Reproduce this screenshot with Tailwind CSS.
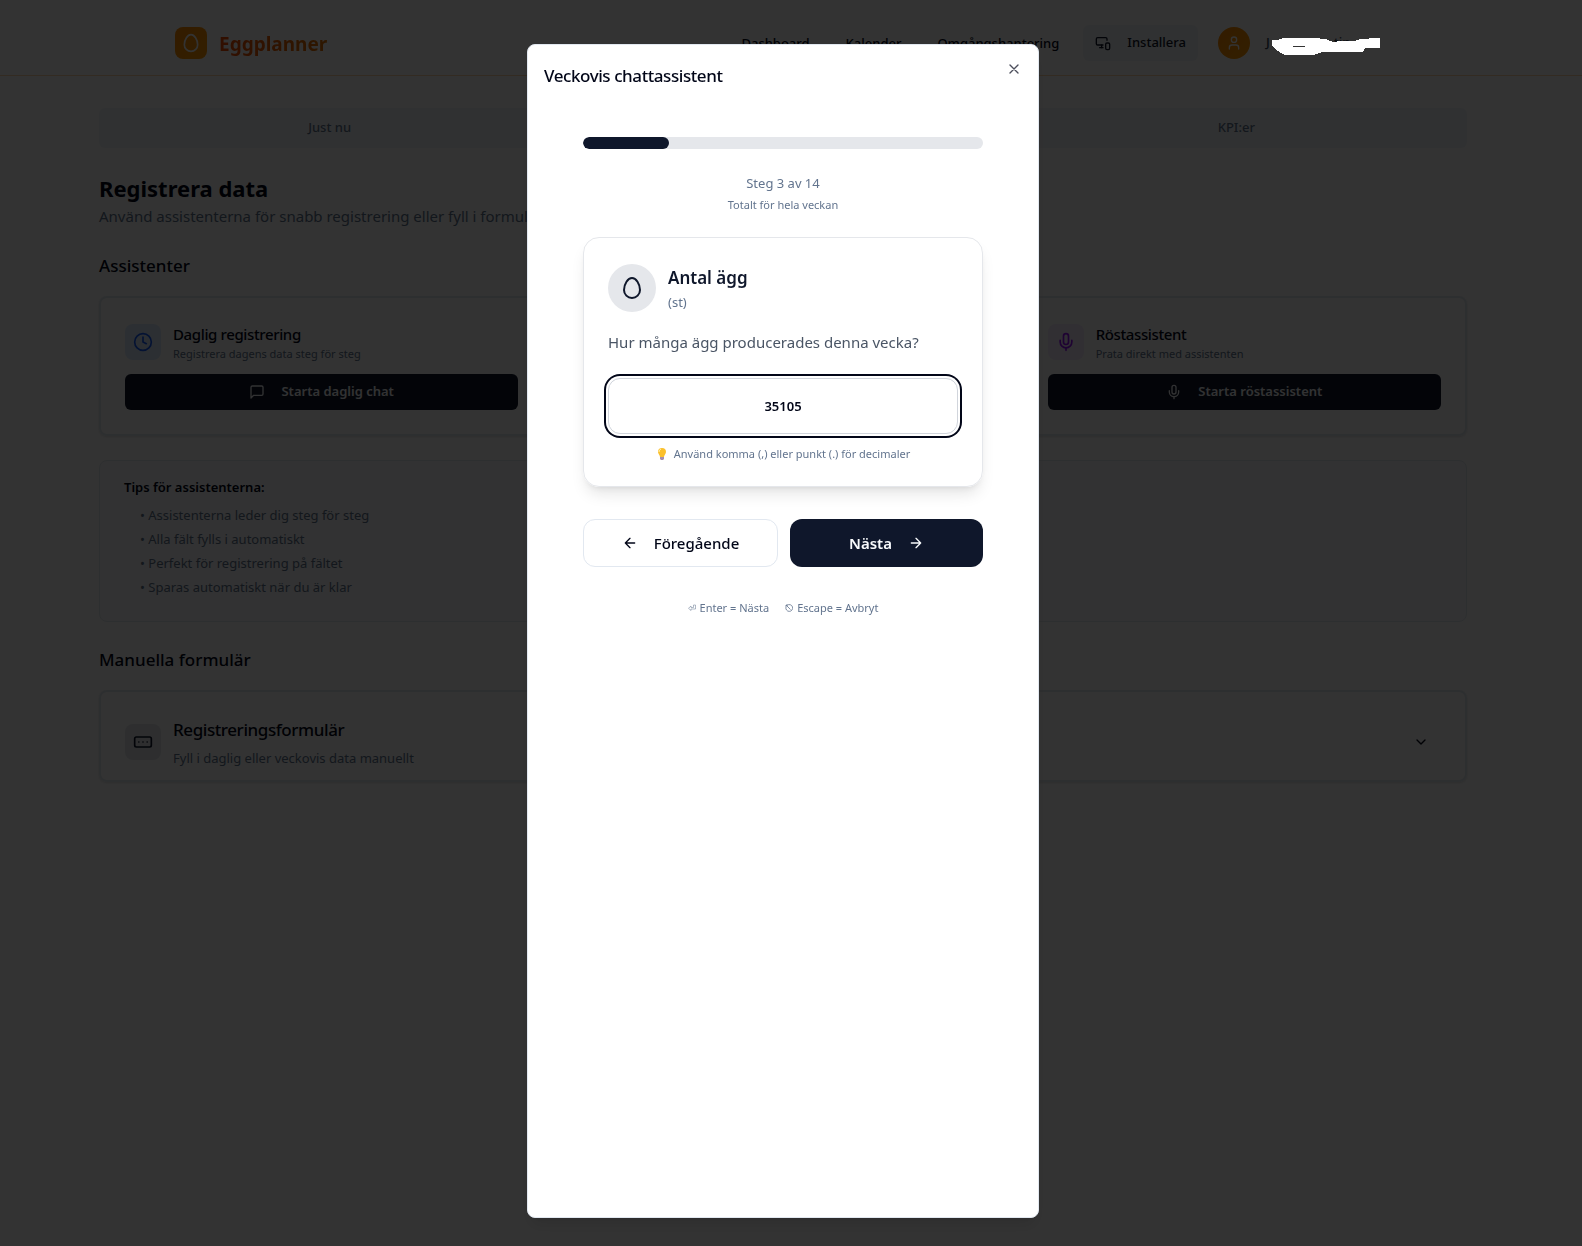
<!DOCTYPE html>
<html lang="sv">
<head>
  <meta charset="UTF-8" />
  <meta name="viewport" content="width=device-width, initial-scale=1.0"/>
  <title>Eggplanner</title>
  <script src="https://cdn.jsdelivr.net/npm/@tailwindcss/browser@4"></script>
</head>
<body class="min-h-screen overflow-x-hidden bg-white font-['Segoe_UI','Noto_Sans',sans-serif] text-slate-950">

  <!-- Header -->
  <header class="border-b border-orange-200 pt-[11px] pr-4">
    <div class="mx-auto flex h-16 max-w-7xl items-center px-8">
      <a href="#" class="flex items-center gap-3">
        <span class="flex size-8 items-center justify-center rounded-lg bg-linear-to-br from-orange-400 to-amber-500 text-white">
          <svg class="size-5" viewBox="0 0 24 24" fill="none" stroke="currentColor" stroke-width="2" stroke-linecap="round" stroke-linejoin="round"><path d="M12 2C8 2 4 8 4 14a8 8 0 0 0 16 0c0-6-4-12-8-12"/></svg>
        </span>
        <span class="bg-linear-to-r from-orange-600 to-amber-600 bg-clip-text pt-0.5 text-[19px] leading-7 font-bold text-transparent">Eggplanner</span>
      </a>
      <nav class="mr-6 ml-auto flex items-center gap-9 pt-0.5 text-[13px] font-medium">
        <a href="#">Dashboard</a>
        <a href="#">Kalender</a>
        <a href="#">Omgångshantering</a>
      </nav>
      <button type="button" class="mr-5 flex h-9 items-center gap-4 rounded-md bg-slate-100 px-3 text-[13px] font-medium text-slate-900">
        <svg class="size-4" viewBox="0 0 24 24" fill="none" stroke="currentColor" stroke-width="2" stroke-linecap="round" stroke-linejoin="round"><path d="M18 8V6a2 2 0 0 0-2-2H4a2 2 0 0 0-2 2v7a2 2 0 0 0 2 2h8"/><path d="M10 19v-3.96 3.15"/><path d="M7 19h5"/><rect width="6" height="10" x="16" y="12" rx="2"/></svg>
        Installera
      </button>
      <div class="flex items-center gap-4">
        <span class="flex size-8 items-center justify-center rounded-full bg-linear-to-br from-orange-400 to-amber-500 text-white">
          <svg class="size-4" viewBox="0 0 24 24" fill="none" stroke="currentColor" stroke-width="2" stroke-linecap="round" stroke-linejoin="round"><path d="M19 21v-2a4 4 0 0 0-4-4H9a4 4 0 0 0-4 4v2"/><circle cx="12" cy="7" r="4"/></svg>
        </span>
        <span class="relative flex w-[125px] gap-16 text-[13px] font-medium text-slate-700">
          <span>J</span><span>tin</span>
          <svg class="absolute top-1 left-1 z-60 h-[18px] w-[110px]" viewBox="0 0 110 18" fill="#fff" shape-rendering="crispEdges"><path fill-rule="evenodd" d="M2 3h6l5-2h35l3 1h5l7 3 8-1h13l6-2h5l7-1h8v10h-15l-2 4H53l-10 3H15L6 13l-1-2-3-2zM23 9v1h12V9z"/></svg>
        </span>
      </div>
    </div>
  </header>

  <!-- Page -->
  <div class="pr-4">
    <main class="mx-auto max-w-[1400px] px-4 pt-8">
      <div class="grid h-10 grid-cols-3 rounded-md bg-slate-100 p-1 text-[13px] font-medium text-slate-500">
        <button type="button">Just nu</button>
        <span class="rounded-sm bg-white shadow-sm"></span>
        <button type="button">KPI:er</button>
      </div>

      <h1 class="mt-6 text-[22px] leading-8 font-bold">Registrera data</h1>
      <p class="text-[15px] leading-6 text-slate-500">Använd assistenterna för snabb registrering eller fyll i formulär</p>

      <h2 class="mt-6 mb-4 text-[17px] leading-7 font-medium">Assistenter</h2>
      <div class="grid grid-cols-3 gap-4">
        <section class="rounded-lg border-2 border-slate-200 p-6 shadow-sm">
          <div class="flex items-center gap-3">
            <span class="flex size-9 items-center justify-center rounded-lg bg-blue-100 text-blue-600">
              <svg class="size-5" viewBox="0 0 24 24" fill="none" stroke="currentColor" stroke-width="2" stroke-linecap="round" stroke-linejoin="round"><circle cx="12" cy="12" r="10"/><path d="M12 6v6l4 2"/></svg>
            </span>
            <div>
              <h3 class="text-[15px] leading-6 font-medium tracking-tight">Daglig registrering</h3>
              <p class="text-[11px] leading-4 text-slate-500">Registrera dagens data steg för steg</p>
            </div>
          </div>
          <button type="button" class="mt-3 flex h-9 w-full items-center justify-center gap-4 rounded-md bg-slate-900 text-[13px] font-semibold text-slate-50">
            <svg class="size-4" viewBox="0 0 24 24" fill="none" stroke="currentColor" stroke-width="2" stroke-linecap="round" stroke-linejoin="round"><path d="M21 15a2 2 0 0 1-2 2H7l-4 4V5a2 2 0 0 1 2-2h14a2 2 0 0 1 2 2z"/></svg>
            Starta daglig chat
          </button>
        </section>

        <section class="rounded-lg border-2 border-slate-200 p-6 shadow-sm"></section>

        <section class="rounded-lg border-2 border-slate-200 p-6 shadow-sm">
          <div class="flex items-center gap-3">
            <span class="flex size-9 items-center justify-center rounded-lg bg-purple-100 text-purple-600">
              <svg class="size-5" viewBox="0 0 24 24" fill="none" stroke="currentColor" stroke-width="2" stroke-linecap="round" stroke-linejoin="round"><path d="M12 2a3 3 0 0 0-3 3v7a3 3 0 0 0 6 0V5a3 3 0 0 0-3-3Z"/><path d="M19 10v2a7 7 0 0 1-14 0v-2"/><path d="M12 19v3"/></svg>
            </span>
            <div>
              <h3 class="text-[15px] leading-6 font-medium tracking-tight">Röstassistent</h3>
              <p class="text-[11px] leading-4 text-slate-500">Prata direkt med assistenten</p>
            </div>
          </div>
          <button type="button" class="mt-3 flex h-9 w-full items-center justify-center gap-4 rounded-md bg-slate-900 text-[13px] font-semibold text-slate-50">
            <svg class="size-4" viewBox="0 0 24 24" fill="none" stroke="currentColor" stroke-width="2" stroke-linecap="round" stroke-linejoin="round"><path d="M12 2a3 3 0 0 0-3 3v7a3 3 0 0 0 6 0V5a3 3 0 0 0-3-3Z"/><path d="M19 10v2a7 7 0 0 1-14 0v-2"/><path d="M12 19v3"/></svg>
            Starta röstassistent
          </button>
        </section>
      </div>

      <!-- Tips -->
      <section class="mt-6 rounded-lg border border-slate-200 bg-slate-50 px-6 pt-4 pb-6 text-[13px] leading-5">
        <h3 class="font-semibold">Tips för assistenterna:</h3>
        <ul class="mt-2 ml-4 space-y-1 text-slate-500">
          <li>• Assistenterna leder dig steg för steg</li>
          <li>• Alla fält fylls i automatiskt</li>
          <li>• Perfekt för registrering på fältet</li>
          <li>• Sparas automatiskt när du är klar</li>
        </ul>
      </section>

      <h2 class="mt-6 mb-4 text-[17px] leading-7 font-medium">Manuella formulär</h2>
      <section class="flex items-center gap-3 rounded-lg border-2 border-slate-200 px-6 pt-6 pb-3 shadow-sm">
        <span class="flex size-9 items-center justify-center rounded-lg bg-gray-200 text-slate-900">
          <svg class="size-5" viewBox="0 0 24 24" fill="none" stroke="currentColor" stroke-width="2" stroke-linecap="round" stroke-linejoin="round"><rect width="20" height="12" x="2" y="6" rx="2"/><path d="M12 12h.01M17 12h.01M7 12h.01"/></svg>
        </span>
        <div>
          <h3 class="text-[17px] leading-7 font-medium tracking-tight">Registreringsformulär</h3>
          <p class="mt-1 text-[13px] leading-5 text-slate-500">Fyll i daglig eller veckovis data manuellt</p>
        </div>
        <button type="button" aria-label="Visa formulär" class="ml-auto px-3">
          <svg class="size-4" viewBox="0 0 24 24" fill="none" stroke="currentColor" stroke-width="2" stroke-linecap="round" stroke-linejoin="round"><path d="m6 9 6 6 6-6"/></svg>
        </button>
      </section>
    </main>
  </div>

  <!-- Overlay -->
  <div class="fixed inset-0 z-40 bg-black/80"></div>

  <!-- Chat dialog -->
  <div class="fixed inset-0 z-50 flex justify-center pt-11 pr-4 pb-7">
    <div role="dialog" aria-labelledby="dialogTitle" class="relative w-full max-w-lg rounded-lg border border-slate-200 bg-white p-4 shadow-lg">
      <h2 id="dialogTitle" class="text-[17px] leading-[30px] font-medium tracking-tight">Veckovis chattassistent</h2>
      <button type="button" aria-label="Stäng" class="absolute top-4 right-4 opacity-70">
        <svg class="size-4" viewBox="0 0 24 24" fill="none" stroke="currentColor" stroke-width="2" stroke-linecap="round" stroke-linejoin="round"><path d="M18 6 6 18M6 6l12 12"/></svg>
      </button>

      <div class="mx-auto max-w-[400px] pt-[46px]">
        <div class="h-3 overflow-hidden rounded-full bg-gray-200">
          <div class="h-full rounded-full bg-slate-900" style="width: 21.4%"></div>
        </div>
        <p class="mt-6 text-center text-[13px] leading-5 text-slate-500">Steg 3 av 14</p>
        <p class="mt-1 text-center text-[11px] leading-4 text-slate-500">Totalt för hela veckan</p>

        <div class="mt-6 rounded-2xl border border-gray-200 p-6 shadow-lg">
          <div class="flex items-center gap-3 py-0.5">
            <span class="flex size-12 items-center justify-center rounded-full bg-gray-200 text-slate-900">
              <svg class="size-6" viewBox="0 0 24 24" fill="none" stroke="currentColor" stroke-width="2" stroke-linecap="round" stroke-linejoin="round"><path d="M12 2C8 2 4 8 4 14a8 8 0 0 0 16 0c0-6-4-12-8-12"/></svg>
            </span>
            <div>
              <h3 class="text-[17px] leading-7 font-semibold text-slate-900">Antal ägg</h3>
              <p class="text-[13px] leading-5 text-slate-500">(st)</p>
            </div>
          </div>
          <label for="eggCount" class="mt-4 block text-[15px] leading-6 text-gray-600">Hur många ägg producerades denna vecka?</label>
          <input id="eggCount" type="text" inputmode="decimal" value="35105" class="mt-6 block h-14 w-full rounded-xl border border-gray-300 bg-white text-center text-[13px] font-semibold ring-2 ring-slate-950 ring-offset-2 outline-none"/>
          <p class="mt-3 flex items-center justify-center gap-1.5 text-[11px] leading-4 text-slate-500">
            <svg class="size-3" viewBox="0 0 12 12"><path d="M6 0a4 4 0 0 0-4 4c0 2 2 3 2 5h4c0-2 2-3 2-5a4 4 0 0 0-4-4z" fill="#fbc02d"/><path d="M5 1a3 3 0 0 0-2 3" fill="none" stroke="#fff3b0"/><path d="M4 9h4v2L7 12H5l-1-1z" fill="#a58fb0"/></svg>
            Använd komma (,) eller punkt (.) för decimaler
          </p>
        </div>

        <div class="mt-8 flex gap-3">
          <button type="button" class="flex h-12 flex-1 items-center justify-center gap-4 rounded-xl border border-slate-200 bg-white text-[15px] font-medium">
            <svg class="size-4" viewBox="0 0 24 24" fill="none" stroke="currentColor" stroke-width="2" stroke-linecap="round" stroke-linejoin="round"><path d="m12 19-7-7 7-7M19 12H5"/></svg>
            Föregående
          </button>
          <button type="button" class="flex h-12 flex-1 items-center justify-center gap-4 rounded-xl bg-slate-900 text-[15px] font-semibold text-slate-50">
            Nästa
            <svg class="size-4" viewBox="0 0 24 24" fill="none" stroke="currentColor" stroke-width="2" stroke-linecap="round" stroke-linejoin="round"><path d="M5 12h14M12 5l7 7-7 7"/></svg>
          </button>
        </div>

        <div class="mt-8 flex justify-center gap-4 text-[11px] leading-[18px] text-slate-500">
          <span class="flex items-center gap-1">
            <svg class="size-2" viewBox="0 0 8 8" fill="none" stroke="currentColor" stroke-width=".5"><path d="M5.500 1h2v4H3v1.500L.5 4.300 3 2v1.500h2.500z"/></svg>
            Enter = Nästa
          </span>
          <span class="flex items-center gap-1">
            <svg class="size-2" viewBox="0 0 8 8" fill="none" stroke="currentColor" stroke-width=".8"><path d="M2.300 1.200A3.400 3.400 0 1 1 1 3M5.500 5.500l-4.500-4.500M1 3V1h2"/></svg>
            Escape = Avbryt
          </span>
        </div>
      </div>
    </div>
  </div>
</body>
</html>
